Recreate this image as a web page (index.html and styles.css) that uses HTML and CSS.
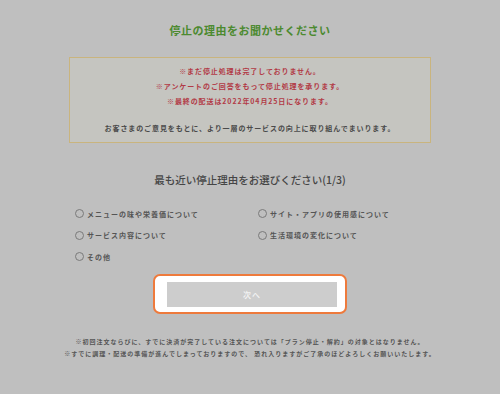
FILE: index.html
```html
<!DOCTYPE html>
<html lang="ja">
<head>
<meta charset="utf-8">
<link rel="stylesheet" href="styles.css">
</head>
<body>
<main class="page">
  <h1 class="title">停止の理由をお聞かせください</h1>
  <section class="notice">
    <p class="warn">※まだ停止処理は完了しておりません。</p>
    <p class="warn">※アンケートのご回答をもって停止処理を承ります。</p>
    <p class="warn">※最終の配送は2022年04月25日になります。</p>
    <p class="note">お客さまのご意見をもとに、より一層のサービスの向上に取り組んでまいります。</p>
  </section>
  <h2 class="question">最も近い停止理由をお選びください(1/3)</h2>
  <div class="options">
    <label class="option"><span class="radio"></span>メニューの味や栄養価について</label>
    <label class="option"><span class="radio"></span>サイト・アプリの使用感について</label>
    <label class="option"><span class="radio"></span>サービス内容について</label>
    <label class="option"><span class="radio"></span>生活環境の変化について</label>
    <label class="option"><span class="radio"></span>その他</label>
  </div>
  <div class="highlight">
    <button class="next" type="button">次へ</button>
  </div>
  <div class="footnote">
    <p>※初回注文ならびに、すでに決済が完了している注文については「プラン停止・解約」の対象とはなりません。</p>
    <p>※すでに調理・配送の準備が進んでしまっておりますので、 恐れ入りますがご了承のほどよろしくお願いいたします。</p>
  </div>
</main>
</body>
</html>
```
FILE: styles.css
```css
html, body {
  margin: 0;
  padding: 0;
  background: #bfbfbf;
}
body {
  font-family: "Noto Sans CJK JP", "Noto Sans", sans-serif;
  width: 500px;
  height: 394px;
  overflow: hidden;
}
.page {
  display: flex;
  flex-direction: column;
  align-items: center;
  padding-top: 22px;
}
.title {
  margin: 0;
  font-size: 11px;
  line-height: 16px;
  font-weight: 700;
  letter-spacing: 0.5px;
  color: #4c8a30;
}
.notice {
  margin-top: 19px;
  width: 362px;
  box-sizing: border-box;
  border: 1px solid #c9b47e;
  background: #c5c5c0;
  padding: 6px 0 6px;
  text-align: center;
}
.notice p {
  margin: 0;
  font-size: 7px;
  line-height: 15px;
  letter-spacing: 0.9px;
  font-weight: 700;
}
.warn {
  color: #b23a46;
}
.notice .note {
  margin-top: 12px;
  color: #4a4a4a;
}
.question {
  margin: 30px 0 0;
  font-size: 10.5px;
  line-height: 14px;
  font-weight: 500;
  color: #454545;
}
.options {
  align-self: flex-start;
  margin: 16px 0 0 75px;
  width: 366px;
  display: grid;
  grid-template-columns: 183px 183px;
  grid-auto-rows: 21.5px;
}
.option {
  display: flex;
  align-items: center;
  gap: 3px;
  font-size: 7px;
  font-weight: 700;
  letter-spacing: 1px;
  color: #555555;
}
.radio {
  width: 9px;
  height: 9px;
  box-sizing: border-box;
  border: 1px solid #7a7a7a;
  border-radius: 50%;
  flex: none;
}
.highlight {
  margin-top: 6px;
  width: 194px;
  height: 40px;
  box-sizing: border-box;
  border: 2px solid #ee7a3c;
  border-radius: 7px;
  background: #ffffff;
  padding: 6px 8px 5px 12px;
  display: flex;
}
.next {
  flex: 1;
  border: none;
  margin: 0;
  background: #cdcdcd;
  color: #f4f4f4;
  font-family: inherit;
  font-size: 8px;
  letter-spacing: 1px;
  font-weight: 500;
  padding: 0;
}
.footnote {
  margin-top: 22px;
  text-align: center;
}
.footnote p {
  margin: 0;
  font-size: 6px;
  line-height: 12px;
  letter-spacing: 1px;
  font-weight: 700;
  color: #555555;
  white-space: nowrap;
}
```
